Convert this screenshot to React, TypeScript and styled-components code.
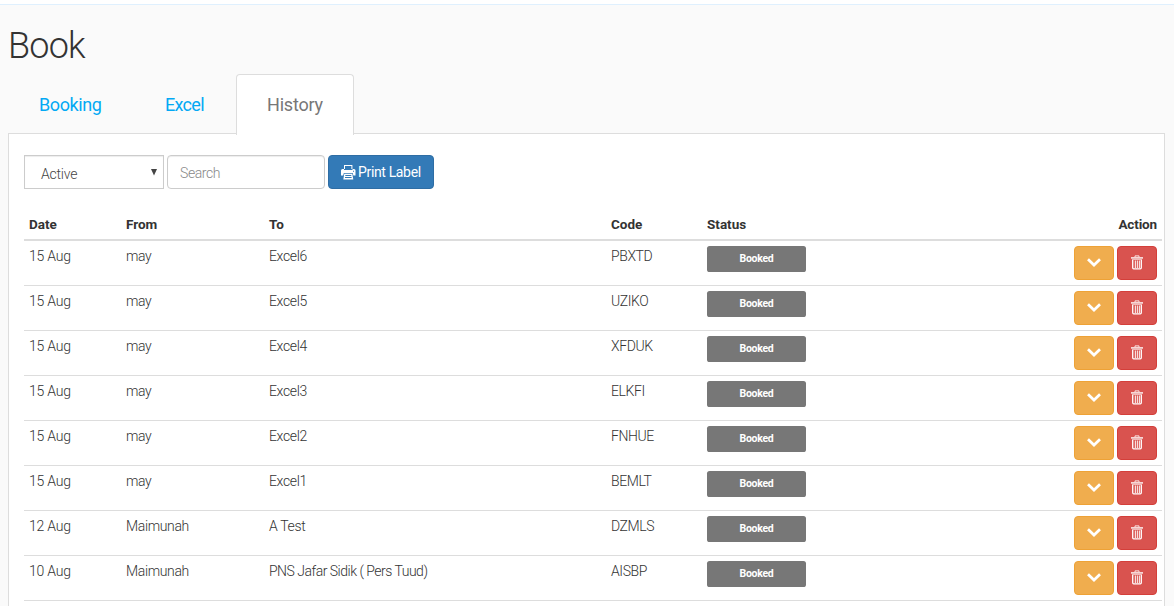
import React from "react";
import styled, { createGlobalStyle } from "styled-components";

const GlobalStyle = createGlobalStyle`
  *, *::before, *::after { box-sizing: border-box; }
  html, body { margin: 0; padding: 0; }
  body {
    background: #fafafa;
    color: #333;
    font-family: Roboto, "Open Sans", sans-serif;
    font-size: 14px;
    font-weight: 300;
    line-height: 20px;
    overflow: hidden;
  }
`;

const Page = styled.div`
  height: 606px;
  overflow: hidden;
`;

const TopStrip = styled.div`
  height: 5px;
  background: #fff;
  border-bottom: 1px solid #dff0fe;
`;

const Content = styled.main`
  padding: 0 9px 0 8px;
`;

const Title = styled.h1`
  margin: 0;
  padding-top: 21px;
  height: 69px;
  font-size: 36px;
  font-weight: 300;
  line-height: 40px;
  letter-spacing: -0.8px;
`;

const TabBar = styled.nav`
  display: flex;
  height: 60px;
  border-bottom: 1px solid #ddd;
`;

const Tab = styled.a<{ $width: number; $active?: boolean; $spacing: number }>`
  width: ${(p) => p.$width}px;
  height: ${(p) => (p.$active ? 61 : 60)}px;
  padding: 20px 0 0 30px;
  border: 1px solid ${(p) => (p.$active ? "#ddd" : "transparent")};
  border-bottom: 0;
  border-radius: 4px 4px 0 0;
  background: ${(p) => (p.$active ? "#fff" : "transparent")};
  color: ${(p) => (p.$active ? "#777" : "#03a9f4")};
  font-size: 18px;
  font-weight: 400;
  line-height: 20px;
  letter-spacing: ${(p) => p.$spacing}px;
  text-decoration: none;
`;

const Panel = styled.section`
  height: 480px;
  padding: 21px 2px 0 15px;
  background: #fff;
  border: 1px solid #ddd;
  border-width: 0 1px;
`;

const Toolbar = styled.div`
  display: flex;
  height: 54px;
`;

const Select = styled.div`
  display: flex;
  justify-content: space-between;
  width: 140px;
  height: 34px;
  margin-right: 3px;
  padding: 8px 5px 0 16px;
  border: 1px solid #ccc;
  background: #fff;
  box-shadow: inset 0 1px 1px rgba(0, 0, 0, 0.075);
  color: #444;
  letter-spacing: -0.2px;
`;

const SelectArrow = styled.svg`
  width: 8px;
  height: 7px;
  margin-top: 5px;
`;

const SearchInput = styled.input`
  width: 158px;
  height: 34px;
  margin: 0 3px 0 0;
  padding: 2px 12px 0;
  border: 1px solid #ccc;
  border-radius: 4px;
  background: #fff;
  box-shadow: inset 0 1px 1px rgba(0, 0, 0, 0.075);
  font: inherit;
  letter-spacing: -0.4px;
  &::placeholder { color: #888; opacity: 1; }
`;

const PrintButton = styled.button`
  display: flex;
  align-items: center;
  width: 106px;
  height: 34px;
  padding: 0 0 0 12px;
  border: 1px solid #2e6da4;
  border-radius: 4px;
  background: #337ab7;
  color: #fff;
  font: inherit;
  font-weight: 400;
  letter-spacing: -0.35px;
  white-space: nowrap;
  svg { flex: none; margin-right: 2px; }
`;

const Table = styled.table`
  width: 1138px;
  table-layout: fixed;
  border-collapse: separate;
  border-spacing: 0;
`;

const HeadCell = styled.th<{ $right?: boolean }>`
  height: 32px;
  padding: 5px;
  border-bottom: 2px solid #ddd;
  font-size: 13.5px;
  font-weight: 700;
  line-height: 20px;
  letter-spacing: ${(p) => (p.$right ? -0.15 : 0)}px;
  text-align: ${(p) => (p.$right ? "right" : "left")};
`;

const Cell = styled.td<{ $spacing?: number }>`
  height: 45px;
  padding: 5px;
  border-bottom: 1px solid #ddd;
  letter-spacing: ${(p) => p.$spacing ?? 0}px;
  line-height: 21px;
  vertical-align: top;
  white-space: nowrap;
`;

const Badge = styled.span`
  display: block;
  width: 99px;
  height: 26px;
  border-radius: 2.6px;
  background: #777;
  color: #fff;
  font-size: 10.5px;
  font-weight: 700;
  line-height: 25px;
  letter-spacing: -0.3px;
  text-align: center;
`;

const Actions = styled.div`
  display: flex;
  justify-content: flex-end;
  gap: 3px;
`;

const IconButton = styled.button<{ $tone: "warning" | "danger" }>`
  display: flex;
  align-items: center;
  justify-content: center;
  width: 40px;
  height: 34px;
  padding: 0;
  border: 1px solid ${(p) => (p.$tone === "warning" ? "#eea236" : "#d43f3a")};
  border-radius: 4px;
  background: ${(p) => (p.$tone === "warning" ? "#f0ad4e" : "#d9534f")};
`;

const PrintIcon = () => (
  <svg width="15" height="15" viewBox="0 0 15 15" fill="#fff">
    <path fillRule="evenodd" d="M3 0h8.4v4H3zM4 1v3h6.4V1z" />
    <path fillRule="evenodd" d="M1.5 4H3v1h8.5V4H13a1.5 1.5 0 0 1 1.5 1.5V10.5h-2.2L11.8 8H2.8l-.6 2.5H0V5.5A1.5 1.5 0 0 1 1.5 4zM12 5.8v1h1v-1z" />
    <path fillRule="evenodd" d="M3.3 8.7h8l1 5.8H2.3zM4.3 10v1h6v-1zM4 12v1h6.6v-1z" />
  </svg>
);

const ChevronIcon = () => (
  <svg width="16" height="12" viewBox="0 0 16 12">
    <path d="M2 2.200l6 5.800L14 2.200" fill="none" stroke="#fff" strokeWidth="2.700" />
  </svg>
);

const TrashIcon = () => (
  <svg width="12" height="16" viewBox="0 0 12 16" fill="none" stroke="#fff">
    <path d="M4 2V.9h4V2" opacity=".85" />
    <path d="M0 2.900h12" strokeWidth="1.500" opacity=".9" />
    <path d="M1 4.500h10" opacity=".6" />
    <path d="M1.700 5v7.800q0 1 1 1h6.600q1 0 1-1V5" strokeWidth="1.300" />
    <path d="M4.400 5.500v7.500M6.400 5.500v7.500M8.400 5.500v7.500" strokeWidth="1.100" opacity=".85" />
  </svg>
);

const bookings = [
  ["15 Aug", "may", "Excel6", "PBXTD"],
  ["15 Aug", "may", "Excel5", "UZIKO"],
  ["15 Aug", "may", "Excel4", "XFDUK"],
  ["15 Aug", "may", "Excel3", "ELKFI"],
  ["15 Aug", "may", "Excel2", "FNHUE"],
  ["15 Aug", "may", "Excel1", "BEMLT"],
  ["12 Aug", "Maimunah", "A Test", "DZMLS"],
  ["10 Aug", "Maimunah", "PNS Jafar Sidik ( Pers Tuud)", "AISBP"],
];

const columns = [97, 143, 342, 96, 300, 160];

export default function App() {
  return (
    <Page>
      <GlobalStyle />
      <TopStrip />
      <Content>
        <Title>Book</Title>
        <TabBar>
          <Tab href="#" $width={126} $spacing={-0.4}>Booking</Tab>
          <Tab href="#" $width={102} $spacing={-0.7}>Excel</Tab>
          <Tab href="#" $width={118} $spacing={-0.2} $active>History</Tab>
        </TabBar>
        <Panel>
          <Toolbar>
            <Select>
              <span>Active</span>
              <SelectArrow viewBox="0 0 8 7"><path d="M1 0h6L4 6.5z" fill="#444" /></SelectArrow>
            </Select>
            <SearchInput placeholder="Search" />
            <PrintButton><PrintIcon />Print Label</PrintButton>
          </Toolbar>
          <Table>
            <colgroup>{columns.map((w, i) => <col key={i} style={{ width: w }} />)}</colgroup>
            <thead>
              <tr>
                <HeadCell>Date</HeadCell>
                <HeadCell>From</HeadCell>
                <HeadCell>To</HeadCell>
                <HeadCell>Code</HeadCell>
                <HeadCell>Status</HeadCell>
                <HeadCell $right>Action</HeadCell>
              </tr>
            </thead>
            <tbody>
              {bookings.map(([date, from, to, code]) => (
                <tr key={code}>
                  <Cell $spacing={-0.2}>{date}</Cell>
                  <Cell $spacing={-0.35}>{from}</Cell>
                  <Cell $spacing={to.length > 10 ? -0.5 : -0.35}>{to}</Cell>
                  <Cell $spacing={-0.4}>{code}</Cell>
                  <Cell><Badge>Booked</Badge></Cell>
                  <Cell>
                    <Actions>
                      <IconButton $tone="warning" aria-label="Expand"><ChevronIcon /></IconButton>
                      <IconButton $tone="danger" aria-label="Delete"><TrashIcon /></IconButton>
                    </Actions>
                  </Cell>
                </tr>
              ))}
            </tbody>
          </Table>
        </Panel>
      </Content>
    </Page>
  );
}
